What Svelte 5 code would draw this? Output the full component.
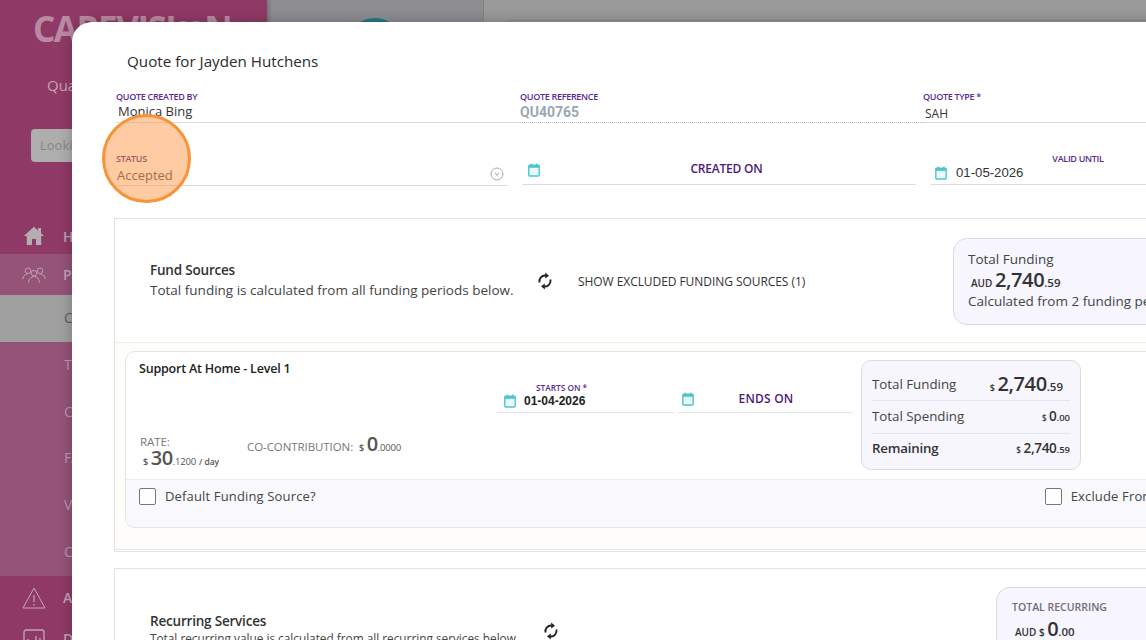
<script>
  const topNav = [
    { label: 'Home', icon: 'home', cls: 'plain h32 lift' },
    { label: 'Participants', icon: 'people', cls: 'soft h41' }
  ];
  const subNav = ['Clients', 'Transactions', 'Claims', 'FAQ', 'Vouchers', 'Contacts'];
</script>

{#snippet refresh()}
  <svg class="refresh" viewBox="0 0 16 18" width="16" height="18" aria-hidden="true">
    <path d="M2.600 10.500A5.600 5.600 0 0 1 8.800 3.600" fill="none" stroke="#222" stroke-width="1.900" />
    <path d="M8.200 0.600 12 3.700 8.200 6.400Z" fill="#222" />
    <path d="M13.400 7.500A5.600 5.600 0 0 1 7.200 14.400" fill="none" stroke="#222" stroke-width="1.900" />
    <path d="M7.800 17.400 4 14.300 7.800 11.600Z" fill="#222" />
  </svg>
{/snippet}

{#snippet calendar()}
  <svg class="cal" viewBox="0 0 12 14" width="12" height="14" aria-hidden="true">
    <rect x="0.800" y="2.200" width="10.400" height="10.800" rx="1" fill="#eafafa" stroke="#4cc6ce" stroke-width="1.400" />
    <rect x="0.800" y="2.200" width="10.400" height="2.600" fill="#4cc6ce" />
    <rect x="2.400" y="0.600" width="1.500" height="2.400" fill="#4cc6ce" />
    <rect x="8.100" y="0.600" width="1.500" height="2.400" fill="#4cc6ce" />
  </svg>
{/snippet}

{#snippet money(cur, whole, frac, size)}
  <span class="money {size}"><span class="cur">{cur}</span> <span class="whole">{whole}</span><span class="frac">{frac}</span></span>
{/snippet}

<div class="app">
  <aside class="sidebar">
    <div class="logo">CAREVISI<svg class="inf" viewBox="0 0 30 26" width="27" height="26" aria-hidden="true"><circle cx="8" cy="13" r="6.500" fill="none" stroke="#b98aa2" stroke-width="5" /><circle cx="22" cy="13" r="6.500" fill="none" stroke="#b98aa2" stroke-width="5" /></svg>N</div>
    <div class="org">Quality Care</div>
    <div class="lookup">Looking for...</div>
    <nav class="nav">
      {#each topNav as item}
        <div class="nav-item {item.cls}">
          <span class="nav-icon">
            {#if item.icon === 'home'}
              <svg viewBox="0 0 22 20" width="22" height="20" aria-hidden="true"><path d="M11 .8 0.800 10h3v9h5.200v-6h4v6h5.200v-9h3L18 7.200V2h-3v2.600Z" fill="#b5adb1" /></svg>
            {:else}
              <svg viewBox="0 0 26 18" width="26" height="18" fill="none" stroke="#c4a5b5" stroke-width="1" aria-hidden="true">
                <circle cx="6.500" cy="4.400" r="3" /><circle cx="19.500" cy="4.400" r="3" /><circle cx="13" cy="7" r="3" />
                <path d="M.8 13.500c.4-3.500 2.500-5.400 5-5.400M25.200 13.500c-.4-3.500-2.500-5.400-5-5.400M7 17.500c.3-4 2.600-6.800 6-6.800s5.700 2.800 6 6.800" />
              </svg>
            {/if}
          </span>
          <span class="nav-label">{item.label}</span>
        </div>
      {/each}
      <div class="sub">
        {#each subNav as label, i}
          <div class="sub-item" class:active={i === 0}>{label}</div>
        {/each}
      </div>
      <div class="nav-item plain h44">
        <span class="nav-icon">
          <svg viewBox="0 0 24 22" width="24" height="22" fill="none" stroke="#c4a5b5" stroke-width="1" aria-hidden="true"><path d="M12 1 23 21H1Z" stroke-linejoin="round" /><path d="M12 8v7M12 17v1.500" stroke-width="1.200" /></svg>
        </span>
        <span class="nav-label">Alerts</span>
      </div>
      <div class="nav-item plain h38">
        <span class="nav-icon">
          <svg viewBox="0 0 22 20" width="22" height="20" fill="none" stroke="#c4a5b5" stroke-width="1.300" aria-hidden="true"><rect x="1" y="1" width="20" height="18" rx="2" /><path d="M5 15v-5M9 15v-3M13 15V7M17 15v-6" /></svg>
        </span>
        <span class="nav-label">Dashboard</span>
      </div>
    </nav>
  </aside>

  <div class="back-left"><div class="avatar"></div></div>
  <div class="back-right"><div class="back-card"></div></div>

  <section class="modal">
    <h1 class="title">Quote for Jayden Hutchens</h1>

    <div class="row-one">
      <div class="field solid">
        <div class="label">QUOTE CREATED BY</div>
        <div class="value">Monica Bing</div>
      </div>
      <div class="field dotted">
        <div class="label">QUOTE REFERENCE</div>
        <div class="value ref">QU40765</div>
      </div>
      <div class="field solid">
        <div class="label">QUOTE TYPE *</div>
        <div class="value small">SAH</div>
      </div>
    </div>

    <div class="row-two">
      <div class="field solid status">
        <div class="label">STATUS</div>
        <div class="value muted">Accepted</div>
        <svg class="chev" viewBox="0 0 14 14" width="14" height="14" fill="none" stroke="#aaa" aria-hidden="true"><circle cx="7" cy="7" r="6" /><path d="M5 5.500 7 8.500 9 5.500" /></svg>
      </div>
      <div class="field solid date created">
        {@render calendar()}
        <span class="float">CREATED ON</span>
      </div>
      <div class="field solid date valid">
        <div class="label centered">VALID UNTIL</div>
        <div class="date-line">{@render calendar()}<span class="date-text">01-05-2026</span></div>
      </div>
    </div>

    <div class="section">
      <div class="head">
        <div class="intro fund">
          <div class="intro-title">Fund Sources</div>
          <div class="intro-sub">Total funding is calculated from all funding periods below.</div>
        </div>
        {@render refresh()}
        <div class="excluded">SHOW EXCLUDED FUNDING SOURCES (1)</div>
        <div class="total-box">
          <div class="tb-line">Total Funding</div>
          <div class="tb-money">{@render money('AUD', '2,740', '.59', 'lg')}</div>
          <div class="tb-line">Calculated from 2 funding periods</div>
        </div>
      </div>

      <div class="body">
        <div class="card">
          <div class="card-main">
            <div class="card-left">
              <div class="card-title">Support At Home - Level 1</div>
              <div class="rates">
                <div class="rate">
                  <div class="rate-label">RATE:</div>
                  <div class="rate-val">{@render money('$', '30', '.1200', 'md')}<span class="per">/ day</span></div>
                </div>
                <div class="co">
                  <span class="rate-label">CO-CONTRIBUTION:</span>
                  {@render money('$', '0', '.0000', 'md')}
                </div>
              </div>
            </div>
            <div class="card-date starts">
              <div class="mini-label">STARTS ON *</div>
              <div class="date-line">{@render calendar()}<span class="date-text bold">01-04-2026</span></div>
            </div>
            <div class="card-date ends">
              {@render calendar()}
              <span class="ends-text">ENDS ON</span>
            </div>
            <div class="summary">
              <div class="sum-row first"><span>Total Funding</span>{@render money('$', '2,740', '.59', 'lg')}</div>
              <div class="sum-row second-row"><span>Total Spending</span>{@render money('$', '0', '.00', 'sm')}</div>
              <div class="sum-row third-row"><strong>Remaining</strong>{@render money('$', '2,740', '.59', 'sm')}</div>
            </div>
          </div>
          <div class="card-foot">
            <label class="check"><span class="box"></span>Default Funding Source?</label>
            <label class="check exclude"><span class="box"></span>Exclude From Funding</label>
          </div>
        </div>
      </div>
    </div>

    <div class="section second">
      <div class="head">
        <div class="intro recurring">
          <div class="intro-title">Recurring Services</div>
          <div class="intro-sub">Total recurring value is calculated from all recurring services below.</div>
        </div>
        {@render refresh()}
        <div class="recurring-box">
          <div class="rb-label">TOTAL RECURRING</div>
          <div class="rb-money">{@render money('AUD $', '0', '.00', 'lg')}</div>
        </div>
      </div>
    </div>
  </section>

  <div class="spot"></div>
</div>

<style>
  :global(body) { margin: 0; }
  .app {
    position: relative;
    display: flex;
    width: 1146px;
    height: 640px;
    overflow: hidden;
    background: #9a9a9a;
    font-family: "Open Sans", "Liberation Sans", sans-serif;
    color: #333;
  }

  /* dimmed page behind the dialog */
  .sidebar {
    width: 267px;
    flex: none;
    background: #8f3a66;
    box-shadow: 2px 0 4px rgba(0, 0, 0, .2);
    z-index: 1;
    color: #c4a5b5;
    overflow: hidden;
    white-space: nowrap;
  }
  .logo {
    display: flex;
    align-items: center;
    height: 26px;
    margin: 16px 0 0 33px;
    font-size: 35px;
    font-weight: 700;
    line-height: 26px;
    color: #b98aa2;
    letter-spacing: -1.500px;
  }
  .inf { margin: 0 1px 0 1px; }
  .org { margin: 33px 0 0 47px; font-size: 15px; line-height: 20px; font-weight: 400; }
  .lookup {
    margin: 34px 0 0 31px;
    width: 220px;
    height: 33px;
    padding-left: 9px;
    box-sizing: border-box;
    background: #aeaeae;
    border-radius: 4px;
    color: #868686;
    font-size: 13px;
    line-height: 33px;
  }
  .nav { margin-top: 60px; display: flex; flex-direction: column; }
  .nav-item { display: flex; align-items: center; padding-left: 22px; }
  .h32 { height: 32px; }
  .h38 { height: 38px; }
  .h41 { height: 41px; }
  .h44 { height: 44px; }
  .lift { padding-bottom: 4px; box-sizing: border-box; }
  .soft { background: #945377; }
  .nav-icon { width: 24px; display: flex; justify-content: center; margin-right: 17px; }
  .nav-label { font-size: 14px; font-weight: 600; color: #bda2b0; }
  .sub { background: #945377; display: flex; flex-direction: column; }
  .sub-item { height: 46.800px; line-height: 46.800px; padding-left: 64px; font-size: 14px; color: #b79aa9; }
  .sub-item.active { background: #a0a0a0; color: #6a5560; }

  .back-left { width: 216px; flex: none; background: #8e8d92; border-right: 1px solid #84838a; display: flex; justify-content: center; align-items: flex-start; }
  .avatar { width: 60px; height: 60px; margin-top: 18px; border-radius: 50%; background: #227a8a; }
  .back-right { flex: 1; padding: 20px 0 0 23px; }
  .back-card { height: 200px; border-top: 1px solid #8c8b90; }

  /* dialog */
  .modal {
    position: absolute;
    left: 72px;
    top: 22px;
    width: 1200px;
    height: 700px;
    z-index: 2;
    padding: 29px 0 0 42px;
    box-sizing: border-box;
    background: #fff;
    border-radius: 20px;
    box-shadow: 0 0 14px rgba(0, 0, 0, .25);
  }
  .title {
    margin: 0 0 0 13px;
    font-size: 15.200px;
    line-height: 20px;
    font-weight: 400;
    color: #2c2c2c;
  }
  .row-one { display: flex; margin: 20px 0 0 2px; }
  .field { position: relative; box-sizing: border-box; }
  .solid { border-bottom: 1px solid #dcdcdc; }
  .dotted { border-bottom: 1px dotted #b5b5b5; }
  .row-one .field { height: 32px; width: 404px; }
  .row-one .field:nth-child(2) { width: 403px; }
  .row-one .field:nth-child(3) { width: 300px; }
  .label {
    font-size: 9px;
    line-height: 12px;
    font-weight: 600;
    color: #5a2b92;
    letter-spacing: -.3px;
    white-space: nowrap;
  }
  .value { font-size: 13px; line-height: 18px; padding-left: 2px; color: #333; margin-top: -1px; }
  .value.small { font-size: 12px; margin-top: 2px; padding-left: 2px; }
  .value.ref { font-family: Roboto, "Liberation Sans", sans-serif; font-weight: 700; font-size: 14px; color: #9aa8b3; padding-left: 0; margin-top: 0; }
  .value.muted { color: #555; margin-top: 1px; padding-left: 1px; font-size: 13px; }

  .row-two { display: flex; align-items: flex-end; margin: 0 0 32px 2px; height: 63px; }
  .status { width: 392px; height: 33px; }
  .chev { position: absolute; right: 4px; top: 14px; }
  .date { display: flex; }
  .created { width: 394px; height: 30px; margin: 0 15px 1px 14px; align-items: center; padding-left: 6px; }
  .float { flex: 1; text-align: center; font-size: 12px; font-weight: 600; color: #4b1a7a; letter-spacing: -.2px; padding-bottom: 2px; padding-right: 3px; }
  .valid { width: 290px; height: 33px; margin-bottom: 1px; flex-direction: column; padding-left: 4px; }
  .centered { text-align: center; margin-top: 1px; }
  .date-line { display: flex; align-items: center; gap: 9px; }
  .valid .date-line { margin-top: -1px; }
  .date-text { font-family: "Liberation Sans", Arial, sans-serif; font-size: 13.200px; line-height: 18px; color: #333; }
  .date-text.bold { font-weight: 700; font-size: 12px; color: #222; }

  .section {
    width: 1100px;
    box-sizing: border-box;
    border: 1px solid #e2e2e2;
    padding-bottom: 1px;
  }
  .second { margin-top: 16px; }
  .head { height: 124px; display: flex; align-items: center; padding-left: 35px; box-sizing: border-box; border-bottom: 1px solid #eeeeee; }
  .intro { flex: none; }
  .intro.fund { width: 387px; padding-bottom: 2px; }
  .intro.recurring { width: 393px; padding-bottom: 6px; }
  .intro-title { font-size: 13.500px; font-weight: 600; line-height: 20px; color: #333; letter-spacing: -.2px; }
  .intro-sub { font-size: 13.500px; line-height: 20px; color: #444; white-space: nowrap; }
  .recurring .intro-sub { font-size: 11.800px; line-height: 12px; margin-top: 1px; }
  .refresh { flex: none; margin-top: 1px; }
  .excluded { margin-left: 25px; width: 375px; font-size: 12px; letter-spacing: -.06px; color: #333; padding-top: 1px; }
  .total-box {
    width: 260px;
    height: 87px;
    box-sizing: border-box;
    padding: 11px 14px;
    margin-top: 2px;
    background: #f7f5fd;
    border: 1px solid #dcd8e8;
    border-radius: 14px;
    white-space: nowrap;
  }
  .tb-line { font-size: 13.500px; line-height: 18px; color: #444; }
  .tb-money { line-height: 24px; height: 24px; padding-left: 3px; }
  .tb-money .cur { font-size: 10px; }

  .money { white-space: nowrap; color: #333; font-size: 10px; }
  .cur { font-size: 9px; font-weight: 600; }
  .whole { font-weight: 600; }
  .frac { font-weight: 600; }
  .money.lg .whole { font-size: 20px; letter-spacing: -.4px; }
  .money.lg .frac { font-size: 11.500px; }
  .money.md { color: #555; }
  .money.md .whole { font-size: 20px; letter-spacing: -.5px; }
  .money.md .frac { font-size: 9.500px; font-weight: 400; letter-spacing: -.2px; }
  .money.sm .whole { font-size: 13.500px; letter-spacing: -.3px; }
  .money.sm .frac { font-size: 9.500px; }
  .money.sm .cur { font-size: 8px; }

  .body { background: #fffdf9; padding: 8px 10px 21px; border-bottom: 1px solid #e4e4e4; }
  .card { background: #fff; border: 1px solid #e3e3e8; border-radius: 10px; overflow: hidden; width: 1200px; }
  .card-main { display: flex; height: 127px; box-sizing: border-box; padding: 8px 0 0 13px; }
  .card-left { width: 358px; flex: none; display: flex; flex-direction: column; justify-content: space-between; padding-bottom: 7px; }
  .card-title { font-size: 12.500px; font-weight: 600; line-height: 18px; color: #222; letter-spacing: -.2px; }
  .rates { display: flex; padding-left: 1px; align-items: flex-end; }
  .rate { width: 107px; }
  .rate-label { font-size: 11.500px; line-height: 16px; color: #777; letter-spacing: -.08px; }
  .rate-val { line-height: 20px; padding-left: 3px; margin-top: -2px; }
  .per { font-size: 8.500px; color: #555; font-weight: 600; margin-left: 3px; }
  .co { padding-bottom: 16px; display: flex; align-items: baseline; gap: 6px; line-height: 16px; }
  .card-date { position: relative; flex: none; box-sizing: border-box; border-bottom: 1px solid #e4e4e4; height: 37px; margin-top: 16px; }
  .starts { width: 177px; margin-right: 3px; padding: 0 0 0 7px; }
  .mini-label { font-size: 8.300px; line-height: 8px; font-weight: 600; color: #5a2b92; padding-left: 32px; margin-top: 8px; }
  .starts .date-line { gap: 8px; }
  .ends { width: 176px; margin-right: 8px; display: flex; align-items: center; padding: 9px 0 0 5px; }
  .ends-text { flex: 1; text-align: center; font-size: 12px; font-weight: 600; color: #4b1a7a; padding-right: 15px; letter-spacing: .2px; }
  .summary {
    flex: none;
    width: 220px;
    height: 110px;
    box-sizing: border-box;
    padding: 0 10px;
    background: #f7f6fc;
    border: 1px solid #dcd8e8;
    border-radius: 10px;
  }
  .sum-row { height: 33px; display: flex; justify-content: space-between; align-items: center; border-top: 1px solid #e6e4ee; font-size: 13.300px; color: #444; box-sizing: border-box; }
  .sum-row strong { font-weight: 600; color: #333; letter-spacing: -.2px; }
  .sum-row.first { border-top: 0; height: 39px; padding: 6px 7px 0 0; }
  .second-row { padding-bottom: 2px; }
  .third-row { padding-bottom: 4px; }
  .card-foot { height: 48px; background: #f9f9fd; border-top: 1px solid #eeeef2; display: flex; padding: 7px 0 0 13px; box-sizing: border-box; }
  .check { display: flex; align-items: center; height: 18px; font-size: 13px; color: #444; letter-spacing: .15px; }
  .box { width: 15px; height: 15px; border: 1px solid #777; border-radius: 2px; background: #fff; margin-right: 9px; flex: none; }
  .exclude { margin-left: 729px; }

  .recurring-box {
    width: 260px;
    height: 88px;
    box-sizing: border-box;
    margin: 0 0 0 437px;
    padding: 11px 15px;
    background: #f7f5fd;
    border: 1px solid #dcd8e8;
    border-radius: 14px;
    white-space: nowrap;
  }
  .rb-label { font-size: 10.500px; font-weight: 600; line-height: 16px; color: #6d6d7c; }
  .rb-money { line-height: 26px; padding-left: 3px; margin-top: 1px; }
  .rb-money .cur { font-size: 10px; }

  /* highlight ring drawn on top of the screenshot */
  .spot {
    position: absolute;
    left: 102px;
    top: 114px;
    width: 89px;
    height: 89px;
    box-sizing: border-box;
    border: 3px solid #f79338;
    border-radius: 50%;
    background: rgba(252, 140, 50, .45);
    z-index: 3;
  }
</style>
